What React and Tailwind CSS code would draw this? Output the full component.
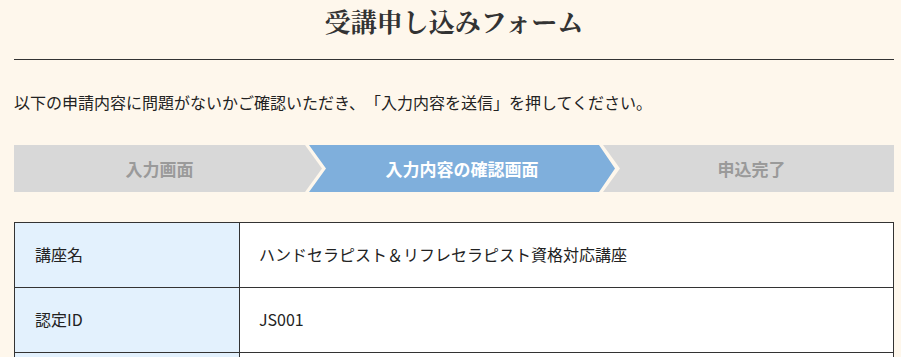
const FONT = "font-['Noto_Sans_CJK_JP','Noto_Sans',sans-serif]";

const STEPS = [
  {
    label: '入力画面',
    cls: 'w-[308px] pr-[17px] bg-[#d8d8d8] text-[#9a9a9a] [clip-path:polygon(0_0,calc(100%-17px)_0,100%_50%,calc(100%-17px)_100%,0_100%)]',
  },
  {
    label: '入力内容の確認画面',
    cls: 'w-[306px] -ml-[13px] bg-[#7fafdc] text-white [clip-path:polygon(0_0,calc(100%-16px)_0,100%_50%,calc(100%-16px)_100%,0_100%,17px_50%)]',
  },
  {
    label: '申込完了',
    cls: 'flex-1 -ml-[12px] pl-[6px] bg-[#d8d8d8] text-[#9a9a9a] [clip-path:polygon(0_0,100%_0,100%_100%,0_100%,17px_50%)]',
  },
];

const ROWS = [
  { label: '講座名', value: 'ハンドセラピスト＆リフレセラピスト資格対応講座' },
  { label: '認定ID', value: 'JS001' },
  { label: 'お名前', value: '山田 花子' },
];

function StepBar() {
  return (
    <div className="flex h-[47px]">
      {STEPS.map((s) => (
        <div
          key={s.label}
          className={`flex items-center justify-center text-[17px] font-bold ${s.cls}`}
        >
          {s.label}
        </div>
      ))}
    </div>
  );
}

export default function App() {
  return (
    <div className={`min-h-screen bg-[#fef7ec] text-[#333] [text-spacing-trim:space-all] ${FONT}`}>
      <div className="ml-[14px] w-[880px]">
        <h1 className="pt-[4px] h-[59px] text-center text-[26px] leading-[34px] font-bold font-['Noto_Serif_CJK_JP','Noto_Sans_CJK_JP',serif] text-[#333]">
          受講申し込みフォーム
        </h1>
        <div className="h-px bg-[#333]" />

        <p className="mt-[30px] text-[16px] leading-[24px] text-[#222]">
          以下の申請内容に問題がないかご確認いただき、「入力内容を送信」を押してください。
        </p>

        <div className="mt-[31px]">
          <StepBar />
        </div>

        <table className="mt-[30px] w-[880px] border-collapse table-fixed text-[16px] text-[#222]">
          <colgroup>
            <col className="w-[225px]" />
            <col />
          </colgroup>
          <tbody>
            {ROWS.map((r) => (
              <tr key={r.label} className="h-[65px]">
                <td className="border border-[#333] bg-[#e3f1fd] pl-[20px] pb-[3px] align-middle">
                  {r.label}
                </td>
                <td className="border border-[#333] bg-white pl-[19px] pb-[3px] align-middle">
                  {r.value}
                </td>
              </tr>
            ))}
          </tbody>
        </table>
      </div>
    </div>
  );
}
